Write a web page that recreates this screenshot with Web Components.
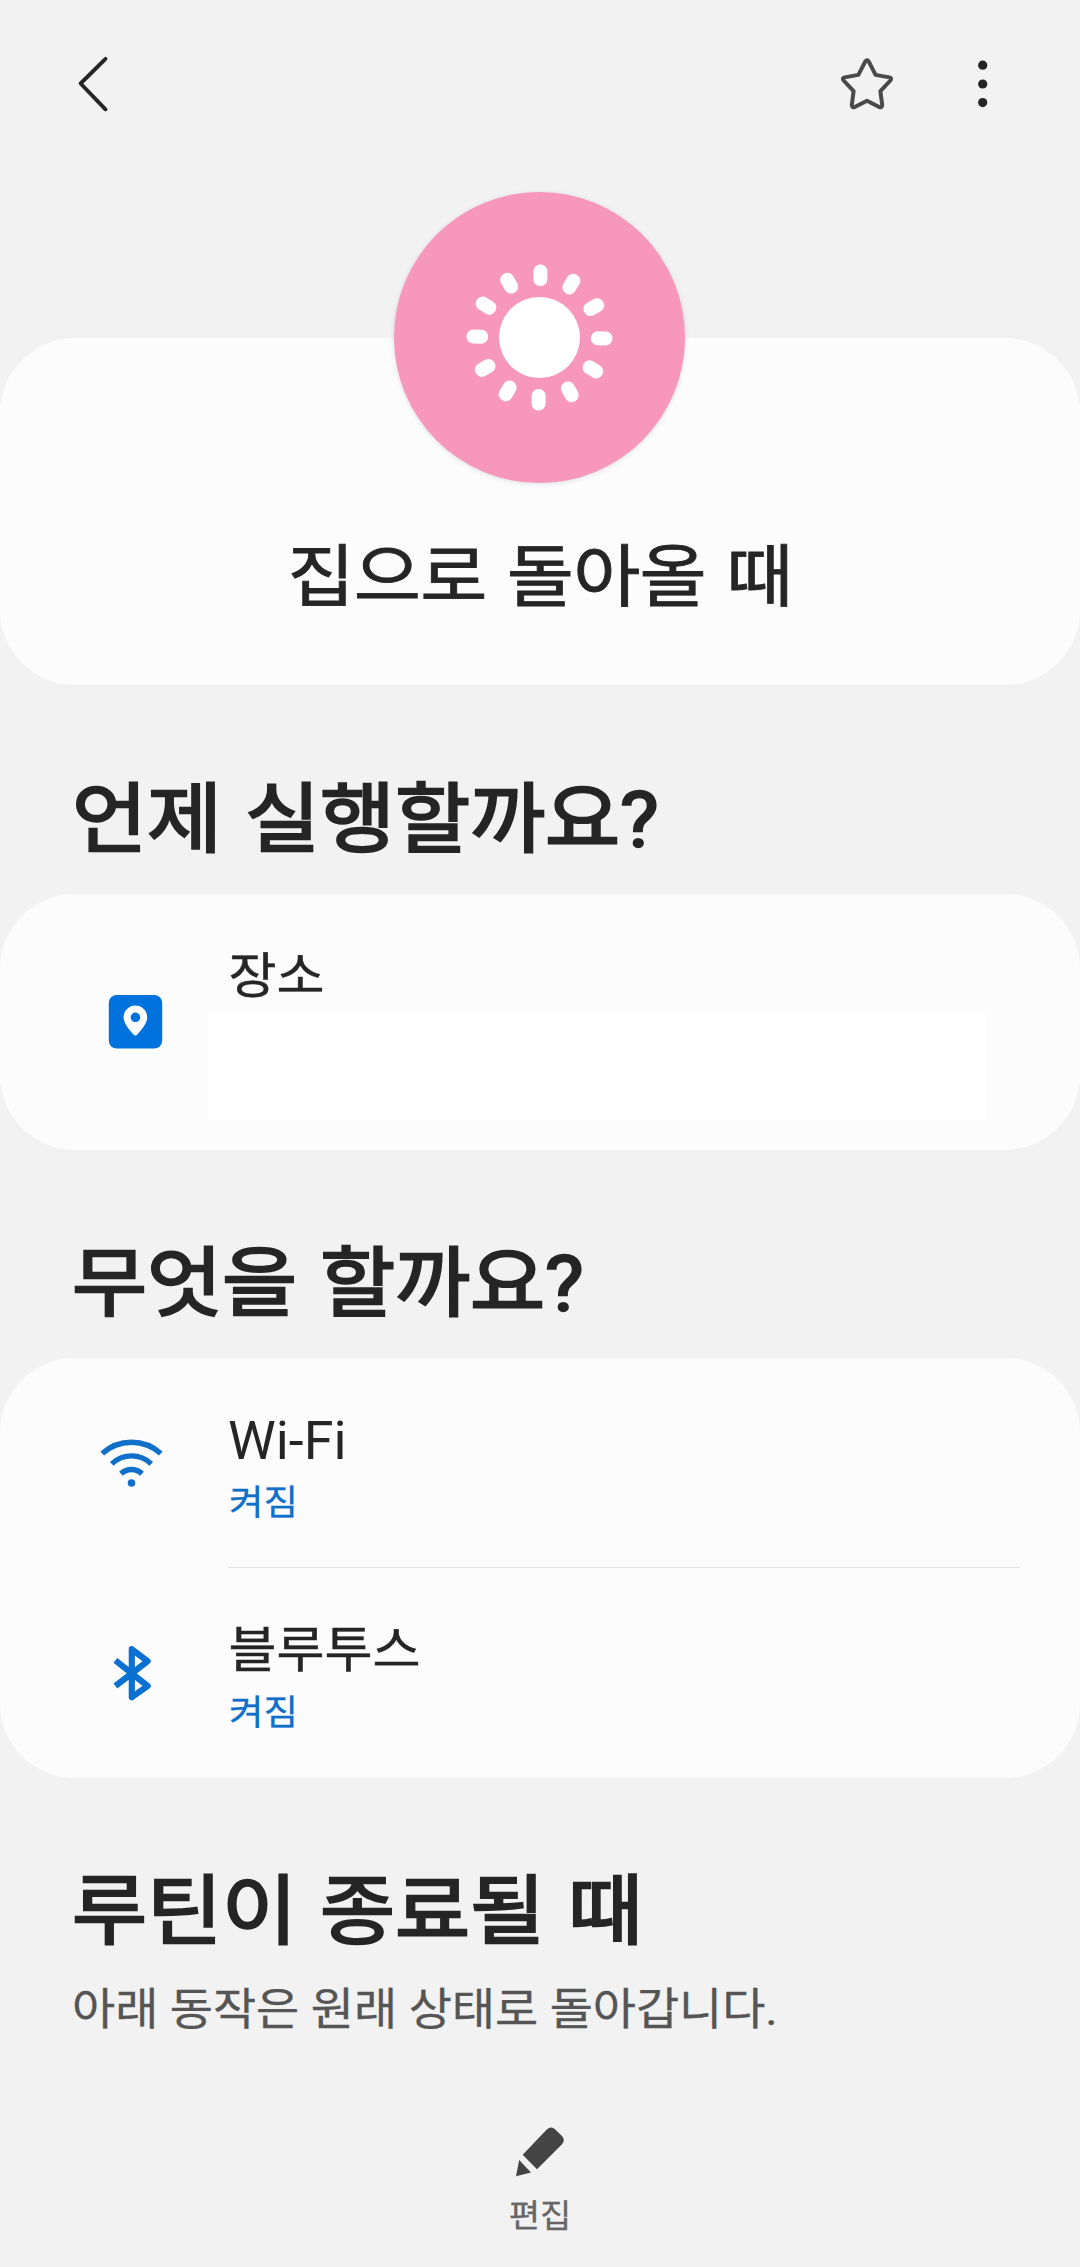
<!DOCTYPE html>
<html lang="ko">
<head>
<meta charset="utf-8">
<title>집으로 돌아올 때</title>
<style>
html, body { margin: 0; background: #f2f2f2; }
body { font-family: Roboto, "Noto Sans CJK KR", sans-serif; color: #252525; }
</style>
</head>
<body>
<routine-page>
  <top-bar></top-bar>
  <routine-hero>집으로 돌아올 때</routine-hero>
  <section-title>언제 실행할까요?</section-title>
  <list-card style="--h:256px">
    <list-row kind="place">장소<hidden-box slot="detail"></hidden-box></list-row>
  </list-card>
  <section-title>무엇을 할까요?</section-title>
  <list-card style="--h:420px">
    <list-row kind="wifi">Wi-Fi<span slot="detail">켜짐</span></list-row>
    <list-row kind="bluetooth" divided>블루투스<span slot="detail">켜짐</span></list-row>
  </list-card>
  <section-title noted>루틴이 종료될 때<span slot="note">아래 동작은 원래 상태로 돌아갑니다.</span></section-title>
  <edit-button>편집</edit-button>
</routine-page>
<script>
const define = (name, html) => customElements.define(name, class extends HTMLElement {
  constructor() {
    super();
    this.attachShadow({ mode: 'open' }).innerHTML = html;
  }
});

define('routine-page', `
<style>:host{display:flex;flex-direction:column;width:1080px;height:2267px;overflow:hidden;background:#f2f2f2}</style>
<slot></slot>`);

define('top-bar', `
<style>
:host{display:flex;justify-content:space-between;align-items:center;height:168px;padding:0 77px 0 71px;box-sizing:border-box;flex:none}
div{display:flex;gap:56px}
svg{display:block}
</style>
<svg width="44" height="60" viewBox="71.4 54 44 60"><path d="M105.9 58.8 81 83.5 105.9 109.3" fill="none" stroke="#252525" stroke-width="3.9" stroke-linecap="round" stroke-linejoin="round"/></svg>
<div>
<svg width="60" height="60" viewBox="837 54 60 60"><path d="M865.2 61.6Q867 59 868.8 61.6L875.6 74.9 889.5 77.4Q892.2 78.4 890.4 80.5L880.4 91.2 882.2 105Q882 108 879.2 107L867 100.8 854.8 107Q852 108 851.8 105L853.6 91.2 843.6 80.5Q841.8 78.4 844.5 77.4L858.4 74.9Z" fill="none" stroke="#4a4a4a" stroke-width="4" stroke-linejoin="round"/></svg>
<svg width="50" height="60" viewBox="953 54 50 60" fill="#252525"><circle cx="982.7" cy="65.2" r="4.6"/><circle cx="982.7" cy="84" r="4.6"/><circle cx="982.7" cy="102.6" r="4.6"/></svg>
</div>`);

const rays = Array.from({ length: 12 }, (_, i) =>
  `<rect x="-7" y="-73" width="14" height="21.6" rx="6.8" transform="rotate(${i * 30 + 0.8})"/>`).join('');

define('routine-hero', `
<style>
:host{display:flex;flex-direction:column;align-items:center;padding-top:24px;flex:none;height:518px;box-sizing:border-box}
.card{width:1080px;height:347px;margin-top:146px;border-radius:75px;background:#fcfcfc;display:flex;flex-direction:column;align-items:center;flex:none}
.disc{width:291px;height:291px;border-radius:50%;background:#f697bb;margin:-146px 1px 0 0;flex:none;box-shadow:0 1px 5px rgba(0,0,0,.12)}
h1{margin:53px 0 0;font-size:73px;line-height:80px;font-weight:400;white-space:nowrap;letter-spacing:-.8px;word-spacing:3px;-webkit-text-stroke:.9px;transform:scaleY(.93);transform-origin:0 65px}
</style>
<div class="card">
<svg class="disc" viewBox="-145.5 -145.5 291 291" fill="#fff"><circle r="40.5"/>${rays}</svg>
<h1><slot></slot></h1>
</div>`);

define('section-title', `
<style>
:host{display:block;padding:82px 72px 0;flex:none}
h2{margin:0 0 26px;font-size:81.6px;line-height:100px;font-weight:400;-webkit-text-stroke:2.5px;letter-spacing:-.1px;word-spacing:3px;white-space:nowrap;transform:scaleY(.93);transform-origin:0 78px}
p{display:none;margin:0;font-size:47px;line-height:60px;color:#555;white-space:nowrap;letter-spacing:-.1px;-webkit-text-stroke:.3px;transform:scaleY(.94);transform-origin:0 46px}
:host([noted]) h2{margin-bottom:19px}
:host([noted]) p{display:block}
</style>
<h2><slot></slot></h2><p><slot name="note"></slot></p>`);

define('list-card', `
<style>:host{display:flex;flex-direction:column;height:var(--h);border-radius:75px;background:#fcfcfc;overflow:hidden;flex:none}</style>
<slot></slot>`);

define('hidden-box', `
<style>:host{display:block;width:777px;height:109px;margin:-2px 0 0 -19px;background:#fff}</style>`);

define('edit-button', `
<style>
:host{display:flex;flex-direction:column;align-items:center;flex:none;margin-top:85px;font-size:34px;line-height:40px;color:#666}
svg{display:block;margin-bottom:15px}
span{-webkit-text-stroke:.3px;transform:scaleY(.94);transform-origin:0 31px}
</style>
<svg width="60" height="56" viewBox="510 2124 60 56" fill="#444"><path d="M522.7 2154.8 546.8 2129.6Q550.8 2125.8 555 2129.2L562 2136Q565.6 2140 562 2144.2L537 2169.3ZM519.2 2160 531 2172.5 516 2176.2Z"/></svg>
<span><slot></slot></span>`);

const icons = {
  place: `<svg width="70" height="70" viewBox="100 987 70 70"><rect x="108.8" y="995" width="53.4" height="53.6" rx="8" fill="#0072de"/><path fill="#fff" fill-rule="evenodd" d="M135.4 1005.6A11.8 11.8 0 0 0 123.6 1017.4C123.6 1024 130 1030 133.4 1034.4Q135.4 1036.4 137.4 1034.4C140.8 1030 147.2 1024 147.2 1017.4A11.8 11.8 0 0 0 135.4 1005.6ZM135.4 1012.5A4.8 4.8 0 1 1 135.4 1022.1 4.8 4.8 0 0 1 135.4 1012.5Z"/></svg>`,
  wifi: `<svg width="70" height="70" viewBox="96 1427 70 70" fill="none" stroke="#0f6fc9" stroke-width="5.4"><path d="M102.2 1453.6A43.6 43.6 0 0 1 160.8 1453.6M111.8 1463.9A28.3 28.3 0 0 1 151.2 1463.9M121 1473.8A15 15 0 0 1 142 1473.8"/><circle cx="131.5" cy="1483" r="3.8" fill="#0f6fc9" stroke="none"/></svg>`,
  bluetooth: `<svg width="70" height="70" viewBox="96 1638 70 70" fill="none" stroke="#0a71d2" stroke-width="6.2" stroke-linejoin="round"><path d="M115.4 1660.4 147.6 1686 131.8 1697.2V1649.2L147.6 1661.2 115.4 1686"/></svg>`
};

customElements.define('list-row', class extends HTMLElement {
  connectedCallback() {
    const kind = this.getAttribute('kind');
    this.attachShadow({ mode: 'open' }).innerHTML = `
<style>
:host{display:flex;height:209px;flex:none;box-sizing:border-box}
.icon{width:132px;padding-left:96px;flex:none}
.icon svg{display:block;margin-top:69px}
:host([kind=place]) .icon svg{margin:93px 0 0 4px}
:host([divided]) .icon svg{margin-top:71px}
.text{width:792px;padding-top:47px;height:209px;box-sizing:border-box;flex:none}
:host([divided]) .text{border-top:1.5px solid #e2e2e2}
.label{font-size:52.2px;line-height:72px;white-space:nowrap;-webkit-text-stroke:.5px;transform:translate(.5px,-1px) scaleY(.93);transform-origin:0 54px}
:host([kind=wifi]) .label{font-size:53.8px;-webkit-text-stroke:0;transform:none}
.detail{font-size:37.5px;line-height:50px;color:#0f6fc9;white-space:nowrap}
.detail ::slotted(span){display:block;-webkit-text-stroke:.3px;transform:translateX(1px) scaleY(.94);transform-origin:0 38px}
</style>
<div class="icon">${icons[kind]}</div>
<div class="text"><div class="label"><slot></slot></div><div class="detail"><slot name="detail"></slot></div></div>`;
  }
});
</script>
</body>
</html>
